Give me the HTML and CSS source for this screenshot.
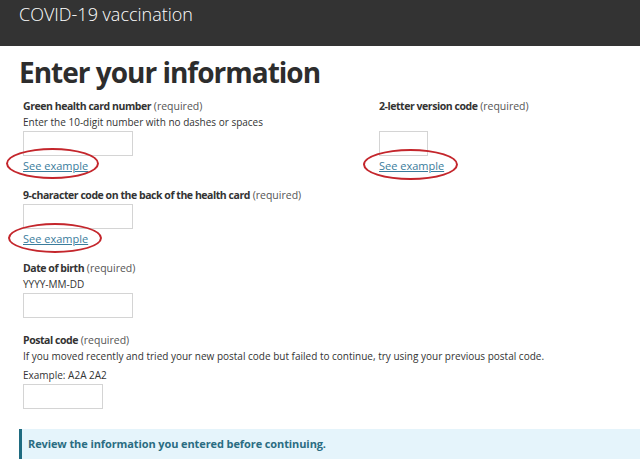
FILE: index.html
```html
<!DOCTYPE html>
<html lang="en">
<head>
<meta charset="utf-8">
<title>COVID-19 vaccination</title>
<link rel="stylesheet" href="styles.css">
</head>
<body>
<header class="topbar">
  <span class="brand">COVID-19 vaccination</span>
</header>
<main class="page">
  <h1 class="title">Enter your information</h1>
  <form class="form">
    <div class="row-two">
      <div class="field">
        <div class="label"><b>Green health card number</b> (required)</div>
        <div class="hint">Enter the 10-digit number with no dashes or spaces</div>
        <input class="input input-md" type="text">
        <div class="link-wrap"><a class="link" href="#">See example</a><span class="ring ring-a"></span></div>
      </div>
      <div class="field">
        <div class="label"><b>2-letter version code</b> (required)</div>
        <div class="hint">&nbsp;</div>
        <input class="input input-xs" type="text">
        <div class="link-wrap"><a class="link" href="#">See example</a><span class="ring ring-b"></span></div>
      </div>
    </div>
    <div class="field">
      <div class="label"><b>9-character code on the back of the health card</b> (required)</div>
      <input class="input input-md" type="text">
      <div class="link-wrap"><a class="link" href="#">See example</a><span class="ring ring-c"></span></div>
    </div>
    <div class="field">
      <div class="label"><b>Date of birth</b> (required)</div>
      <div class="hint">YYYY-MM-DD</div>
      <input class="input input-md" type="text">
    </div>
    <div class="field field-postal">
      <div class="label"><b>Postal code</b> (required)</div>
      <div class="hint">If you moved recently and tried your new postal code but failed to continue, try using your previous postal code.</div>
      <div class="hint hint-gap">Example: A2A 2A2</div>
      <input class="input input-sm" type="text">
    </div>
  </form>
  <div class="alert">Review the information you entered before continuing.</div>
</main>
</body>
</html>
```

FILE: styles.css
```css
* { box-sizing: border-box; }
html, body { margin: 0; padding: 0; background: #ffffff; }
body {
  font-family: "Open Sans", "Noto Sans", sans-serif;
  color: #333333;
}
.topbar {
  height: 46px;
  background: #333333;
  padding: 0 0 0 19px;
}
.brand {
  color: #ffffff;
  font-size: 18px;
  font-weight: 300;
  line-height: 29px;
}
.page {
  padding: 0 0 0 19px;
}
.title {
  margin: 0;
  padding-top: 6px;
  font-size: 28px;
  line-height: 40px;
  font-weight: 700;
  letter-spacing: -1px;
  color: #2d2d2d;
}
.form {
  padding: 6px 0 0 4px;
  display: flex;
  flex-direction: column;
  gap: 13px;
}
.row-two {
  display: grid;
  grid-template-columns: 356px 1fr;
}
.field {
  display: flex;
  flex-direction: column;
  align-items: flex-start;
}
.label {
  font-size: 10.5px;
  line-height: 16px;
  color: #555555;
}
.label b { color: #333333; font-weight: 700; letter-spacing: -0.45px; }
.hint {
  font-size: 10px;
  line-height: 16px;
  color: #333333;
}
.hint-gap { margin-top: 3px; }
.input {
  margin-top: 1px;
  height: 25px;
  border: 1px solid #d4d4d4;
  background: #ffffff;
  padding: 0;
}
.input-md { width: 110px; }
.input-sm { width: 80px; }
.input-xs { width: 49px; }
.link-wrap {
  position: relative;
  margin-top: 0;
  line-height: 16px;
}
.link {
  font-size: 11px;
  color: #3a7c9c;
  text-decoration: underline;
}
.ring {
  position: absolute;
  border: 2px solid #c4262c;
  border-radius: 50%;
  pointer-events: none;
}
.ring-a { left: -17px; top: -8px; width: 93px; height: 31px; }
.ring-b { left: -16px; top: -7px; width: 95px; height: 31px; }
.ring-c { left: -15px; top: -6px; width: 94px; height: 30px; }
.field-postal { margin-top: 1px; }
.alert {
  margin-top: 20px;
  background: #e5f4fb;
  border-left: 3px solid #1f6b80;
  padding: 7px 0 7px 6px;
  font-size: 11px;
  line-height: 16px;
  font-weight: 700;
  letter-spacing: -0.1px;
  color: #2a6c82;
}
```
